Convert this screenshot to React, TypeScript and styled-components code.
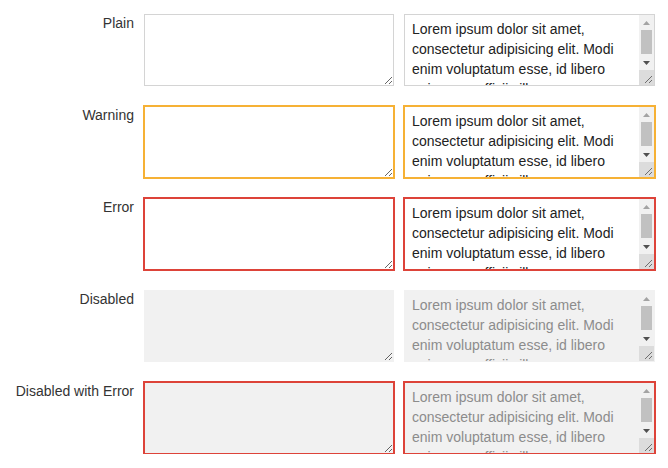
import React from "react";
import styled, { createGlobalStyle, css } from "styled-components";

const Global = createGlobalStyle`
  html, body { margin: 0; padding: 0; background: #ffffff; }
  body { font-family: "Liberation Sans", Arial, sans-serif; color: #333333; }
`;

type Variant = "plain" | "warning" | "error" | "disabled" | "disabledError";

const variantStyles = css<{ $variant: Variant }>`
  ${({ $variant }) =>
    $variant === "warning" &&
    css`
      border-color: #f6b135;
      box-shadow: 0 0 0 1px #f6b135;
    `}
  ${({ $variant }) =>
    $variant === "error" &&
    css`
      border-color: #dd4339;
      box-shadow: 0 0 0 1px #dd4339;
    `}
  ${({ $variant }) =>
    $variant === "disabled" &&
    css`
      background: #f1f1f1;
      border-color: #f1f1f1;
    `}
  ${({ $variant }) =>
    $variant === "disabledError" &&
    css`
      background: #f1f1f1;
      border-color: #dd4339;
      box-shadow: 0 0 0 1px #dd4339;
    `}
`;

const Form = styled.div`
  display: grid;
  grid-template-columns: 126px 250px 251px;
  column-gap: 10px;
  row-gap: 20px;
  padding: 14px 0 0 8px;
`;

const Label = styled.label`
  font-size: 14px;
  line-height: 18px;
  text-align: right;
  color: #333333;
`;

const EmptyArea = styled.textarea<{ $variant: Variant }>`
  display: block;
  box-sizing: border-box;
  width: 100%;
  height: 72px;
  margin: 0;
  padding: 4px 7px;
  font-family: "Liberation Sans", Arial, sans-serif;
  font-size: 14px;
  line-height: 20px;
  color: #222222;
  background: #ffffff;
  border: 1px solid #d4d4d4;
  border-radius: 0;
  outline: none;
  resize: both;
  ${variantStyles}
`;

const Box = styled.div<{ $variant: Variant }>`
  display: flex;
  box-sizing: border-box;
  height: 72px;
  background: #ffffff;
  border: 1px solid #d4d4d4;
  overflow: hidden;
  ${variantStyles}
`;

const FilledArea = styled.textarea<{ $muted: boolean }>`
  flex: 1;
  min-width: 0;
  margin: 0;
  padding: 4px 7px;
  border: none;
  outline: none;
  resize: none;
  overflow: hidden;
  background: transparent;
  font-family: "Liberation Sans", Arial, sans-serif;
  font-size: 14px;
  line-height: 20px;
  color: ${({ $muted }) => ($muted ? "#8c8c8c" : "#222222")};
`;

const Scrollbar = styled.div`
  display: flex;
  flex-direction: column;
  width: 15px;
  flex: 0 0 15px;
  background: #f1f1f1;
`;

const ArrowButton = styled.div`
  display: flex;
  align-items: center;
  justify-content: center;
  height: 15px;
  flex: 0 0 15px;
`;

const Track = styled.div`
  flex: 1;
  display: flex;
  flex-direction: column;
  padding: 0 2px;
`;

const Thumb = styled.div`
  height: 24px;
  background: #c1c1c1;
`;

const Corner = styled.div`
  display: flex;
  height: 15px;
  flex: 0 0 15px;
  background: #dcdcdc;
`;

const Up = ({ color }: { color: string }) => (
  <svg width="7" height="4" viewBox="0 0 7 4">
    <polygon points="3.5,0 7,4 0,4" fill={color} />
  </svg>
);

const Down = ({ color }: { color: string }) => (
  <svg width="7" height="4" viewBox="0 0 7 4">
    <polygon points="0,0 7,0 3.5,4" fill={color} />
  </svg>
);

const Grip = () => (
  <svg width="15" height="15" viewBox="0 0 15 15">
    <line x1="6" y1="13" x2="13" y2="6" stroke="#6e6e6e" strokeWidth="1" />
    <line x1="10" y1="13" x2="13" y2="10" stroke="#6e6e6e" strokeWidth="1" />
  </svg>
);

const LOREM =
  "Lorem ipsum dolor sit amet, consectetur adipisicing elit. Modi enim voluptatum esse, id libero quisquam officiis illo.";

const rows: { label: string; variant: Variant }[] = [
  { label: "Plain", variant: "plain" },
  { label: "Warning", variant: "warning" },
  { label: "Error", variant: "error" },
  { label: "Disabled", variant: "disabled" },
  { label: "Disabled with Error", variant: "disabledError" },
];

export default function App() {
  return (
    <>
      <Global />
      <Form>
        {rows.map((r) => {
          const disabled = r.variant === "disabled" || r.variant === "disabledError";
          return (
            <React.Fragment key={r.label}>
              <Label>{r.label}</Label>
              <EmptyArea $variant={r.variant} disabled={disabled} />
              <Box $variant={r.variant}>
                <FilledArea $muted={disabled} disabled={disabled} defaultValue={LOREM} />
                <Scrollbar>
                  <ArrowButton>
                    <Up color="#a3a3a3" />
                  </ArrowButton>
                  <Track>
                    <Thumb />
                  </Track>
                  <ArrowButton>
                    <Down color="#505050" />
                  </ArrowButton>
                  <Corner>
                    <Grip />
                  </Corner>
                </Scrollbar>
              </Box>
            </React.Fragment>
          );
        })}
      </Form>
    </>
  );
}
